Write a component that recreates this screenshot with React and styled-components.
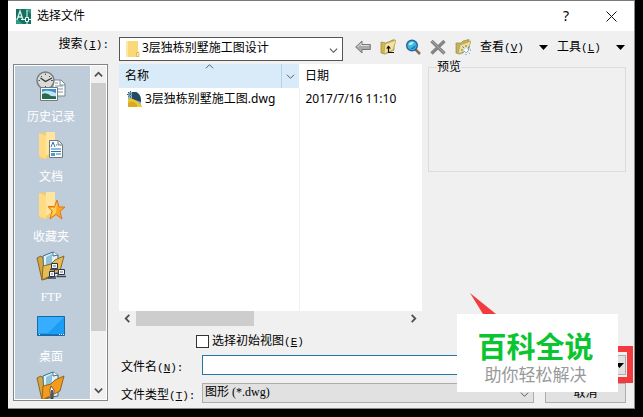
import React from "react";
import styled, { createGlobalStyle } from "styled-components";

const GlobalStyle = createGlobalStyle`
  * {
    box-sizing: border-box;
  }
  body {
    margin: 0;
    background: #000;
    color: #000;
    font-family: "Noto Sans", "Noto Sans CJK SC", sans-serif;
    font-size: 12px;
    line-height: 16px;
  }
  button, input, select {
    font: inherit;
    color: inherit;
    margin: 0;
    padding: 0;
    border-radius: 0;
  }
  svg {
    display: block;
    flex: none;
  }
`;

const Page = styled.div`
  padding: 0 8px;
`;

const Dialog = styled.main`
  position: relative;
  background: #f0f0f0;
  border-top: 1px solid #7b7b74;
  border-right: 1px solid #8a8a8a;
  border-bottom: 1px solid #8a8a8a;
`;

const TitleBar = styled.header`
  display: flex;
  align-items: center;
  height: 30px;
  padding: 0 8px;
  background: #fff;
`;

const Title = styled.h1`
  flex: 1;
  margin: 0 0 0 6px;
  font-size: 12px;
  font-weight: 400;
`;

const PlainButton = styled.button`
  display: flex;
  align-items: center;
  justify-content: center;
  border: 0;
  background: none;
`;

const CaptionButton = styled(PlainButton)`
  width: 30px;
  height: 30px;
  margin-left: 15px;
  font-size: 14px;
`;

const SearchRow = styled.div`
  display: flex;
  align-items: flex-start;
  height: 30px;
  padding: 6px 8px 0 5px;
`;

const SearchLabel = styled.label`
  width: 106px;
  padding-right: 10px;
  text-align: right;
  line-height: 14px;
`;

const KeyText = styled.span`
  font-family: "Liberation Mono", monospace;
  font-size: 11px;
  line-height: 0;
`;

const SelectBox = styled.div`
  position: relative;
  flex: 1;
  display: flex;
  align-items: center;
  min-width: 0;
  height: ${(p) => (p.$folder ? 24 : 20)}px;
  padding-left: ${(p) => (p.$folder ? 6 : 0)}px;
  border: 1px solid ${(p) => (p.$folder ? "#555" : "#adadad")};
  background: ${(p) => (p.$folder ? "#fff" : "#e1e1e1")};

  select {
    flex: 1;
    min-width: 0;
    height: 100%;
    padding: 0 20px 3px 2px;
    border: 0;
    appearance: none;
    background: none;
    font-family: ${(p) => (p.$folder ? "inherit" : '"Liberation Serif", "Noto Sans CJK SC", serif')};
  }
  > svg:last-child {
    position: absolute;
    right: 4px;
    bottom: ${(p) => (p.$folder ? 5 : 3)}px;
    pointer-events: none;
  }
`;

const Toolbar = styled.div`
  display: flex;
  align-items: center;
  gap: 9px;
  height: 20px;
  margin-left: 12px;
  padding-right: 1px;
`;

const MenuButton = styled(PlainButton)`
  justify-content: space-between;
  width: 68px;
`;

const Body = styled.div`
  display: flex;
  align-items: flex-start;
  gap: 11px;
  padding: 0 8px 5px 5px;
`;

const Places = styled.nav`
  display: flex;
  width: 95px;
  height: 337px;
  margin-top: 3px;
  border: 1px solid #82858a;
  background: #fff;
  padding: 1px;
`;

const PlaceList = styled.div`
  flex: 1;
  margin-right: 1px;
  padding-top: 2px;
  overflow: hidden;
  background: #bfcddb;
`;

const Place = styled(PlainButton)`
  flex-direction: column;
  gap: 7px;
  width: 100%;
  height: 60px;
  padding-right: 3px;
  color: #fff;
  line-height: 18px;
  font-family: "Liberation Serif", "Noto Sans CJK SC", serif;
`;

const PlaceName = styled.span`
  height: 18px;
`;

const ScrollBar = styled.div`
  display: flex;
  flex-direction: ${(p) => (p.$vertical ? "column" : "row")};
  ${(p) => (p.$vertical ? "width: 15px" : "height: 16px")};
  background: #f0f0f0;

  button {
    flex: none;
    width: ${(p) => (p.$vertical ? 15 : 17)}px;
    height: ${(p) => (p.$vertical ? 17 : 15)}px;
  }
`;

const Track = styled.div`
  flex: 1;
`;

const Thumb = styled.div`
  background: #cdcdcd;
  width: ${(p) => (p.$vertical ? "100%" : "44%")};
  height: ${(p) => (p.$vertical ? "83%" : "15px")};
`;

const Content = styled.div`
  flex: 1;
  min-width: 0;
`;

const Panels = styled.div`
  display: flex;
  align-items: flex-start;
  gap: 6px;
`;

const FilePanel = styled.section`
  flex: 1;
  min-width: 0;
  padding-top: 3px;
`;

const FileTable = styled.table`
  width: 100%;
  height: 247px;
  table-layout: fixed;
  border-collapse: collapse;
  background: #fff;

  th {
    height: 24px;
    padding: 0;
    font-weight: 400;
    text-align: left;
  }
  th:first-child {
    width: 180px;
    background: #d9ebf9;
  }
  td {
    height: 22px;
    padding: 0 0 0 6px;
    white-space: nowrap;
  }
  td:first-child {
    border-right: 1px solid #f0f0f0;
    padding-left: 8px;
  }
  tr:last-child td {
    height: auto;
  }
`;

const HeadCell = styled.div`
  position: relative;
  display: flex;
  align-items: center;
  height: 24px;
  padding-left: 6px;

  > button:first-child {
    flex: 1;
    justify-content: flex-start;
  }
  > svg {
    position: absolute;
    left: 48%;
    top: -2px;
  }
`;

const HeadArrow = styled(PlainButton)`
  width: 18px;
  height: 24px;
  border-left: 1px solid #b5d3ea;
`;

const FileName = styled.div`
  display: flex;
  align-items: center;
  gap: 2px;
`;

const Preview = styled.fieldset`
  width: 198px;
  height: 111px;
  min-width: 0;
  margin: 0;
  padding: 0;
  border: 1px solid #dcdcdc;

  legend {
    margin-left: 8px;
    padding: 0;
    line-height: 12px;
  }
`;

const ViewOption = styled.label`
  display: flex;
  align-items: center;
  gap: 3px;
  padding: 6px 0 4px 77px;

  input {
    appearance: none;
    width: 13px;
    height: 13px;
    border: 1px solid #333;
    background: #fff;
  }
`;

const Fields = styled.div`
  display: grid;
  grid-template-columns: 81px minmax(0, 1fr) 81px;
  gap: 8px 0;
  padding: 2px 0 0 2px;

  > label {
    height: 20px;
    padding-top: 4px;
  }
`;

const NameInput = styled.input`
  width: 100%;
  height: 20px;
  padding: 0 4px;
  border: 1px solid #2476a8;
  background: #fff;
  outline: 0;
`;

const FieldSlot = styled.div`
  display: flex;
  padding-right: 11px;
`;

const PushButton = styled(PlainButton)`
  width: 100%;
  height: 20px;
  border: 1px solid #adadad;
  background: #e1e1e1;
`;

const OpenSlot = styled.div`
  position: relative;

  ${PushButton} {
    justify-content: flex-end;
    padding-right: 1px;
  }
`;

const RedFrame = styled.div`
  position: absolute;
  inset: -9px -7px -8px;
  border: 6px solid #f23a3f;
  pointer-events: none;
`;

const Banner = styled.aside`
  position: absolute;
  right: 16px;
  bottom: 16px;
  width: 161px;
  padding: 12px 4px 8px 0;
  background: #fff;
  text-align: center;
  font-family: "Noto Sans CJK SC", sans-serif;

  strong {
    display: block;
    color: #0ac52f;
    font-size: 29px;
    font-weight: 700;
    line-height: 38px;
  }
  span {
    display: block;
    color: #999;
    font-size: 17px;
    line-height: 20px;
  }
  svg {
    position: absolute;
    left: 12px;
    bottom: 100%;
  }
`;

const Chevron = ({ turn = 0, size = 9, color = "#505050", weight = 2 }) => (
  <svg width={size} height={size} viewBox="0 0 10 10" fill="none">
    <path d="M1 3 5 7 9 3" stroke={color} strokeWidth={weight} transform={`rotate(${turn} 5 5)`} />
  </svg>
);

const Caret = () => (
  <svg width="9" height="5" viewBox="0 0 9 5">
    <path d="M0 0H9L4.500 5Z" fill="#000" />
  </svg>
);

const AppIcon = () => (
  <svg width="15" height="15" viewBox="0 0 15 15">
    <path d="M0 0H15V15H0Z" fill="#167062" />
    <path d="M0 9 7 15H0ZM9 0H15V5Z" fill="#2c9b84" />
    <path d="M1 11 4 2 7 11M2 8H6" stroke="#d8f1e9" fill="none" strokeWidth="1.300" />
    <path d="M11 1V15M5 10.500H15" stroke="#e8fff8" />
    <path d="M9.500 8.500H12.500V12.500H9.500Z" fill="#167062" stroke="#e8fff8" />
  </svg>
);

const SmallFolder = () => (
  <svg width="14" height="16" viewBox="0 0 14 16">
    <path d="M0 0H12V10L13 11V16H0Z" fill="#f8d877" />
    <path d="M0 0H2V16H0Z" fill="#ffe9a2" />
    <path d="M10.500 11.500H13V15.500H10.500Z" fill="#ffe9a2" stroke="#d7ae4a" strokeWidth=".7" />
  </svg>
);

const DwgIcon = () => (
  <svg width="16" height="16" viewBox="0 0 16 16">
    <path d="M1 1H9C12 2 14 5 14 10V15H1Z" fill="#8fb4c6" />
    <path d="M5 1H9C13 3 14 6 14 11L5 8Z" fill="#234963" />
    <path d="M1 8C5 6 9 9 15 15V16H1Z" fill="#f1c62d" />
    <path d="M1 12Q6 8 10 14V16H1Z" fill="#dba91f" />
    <path d="M3.500 0V7M0 3.500H7M1 1 6 6M6 1 1 6" stroke="#315a72" strokeDasharray="1.500 1" />
  </svg>
);

const BackIcon = () => (
  <svg width="16" height="16" viewBox="0 0 16 16">
    <path d="M.7 8 7 2V5.500H15.300V10.500H7V14Z" fill="#aaa" stroke="#777" />
    <path d="M2.500 8 6 4.500V6.500H14" stroke="#ddd" fill="none" />
  </svg>
);

const UpIcon = () => (
  <svg width="16" height="16" viewBox="0 0 16 16">
    <path d="M1 3 6 4 14 .5V11L5 15 1 14Z" fill="#d2b64f" stroke="#9c8540" strokeWidth=".7" />
    <path d="M5 5 16 1 13 11 4 15Z" fill="#f2e4a0" stroke="#b99d48" strokeWidth=".7" />
    <path d="M8.500 7V13.500H14" stroke="#111" fill="none" strokeWidth="1.200" />
    <path d="M6 9.500 8.500 6.500 11 9.500Z" fill="#111" />
  </svg>
);

const SearchIcon = () => (
  <svg width="16" height="16" viewBox="0 0 16 16">
    <path d="M10 10 15 15" stroke="#8a6b4c" strokeWidth="2.500" />
    <circle cx="7" cy="6.500" r="5.300" fill="#45b9dc" stroke="#2668a6" strokeWidth="1.500" />
    <path d="M3.500 6Q5 2 9 3.500L6 6Z" fill="#c8f3fa" />
    <path d="M5 10Q10 11 11 6L8 8Z" fill="#1780ba" />
  </svg>
);

const DeleteIcon = () => (
  <svg width="16" height="16" viewBox="0 0 16 16">
    <path d="M1.500 2 14.500 14.500M14.500 2 1.500 14.500" stroke="#858585" strokeWidth="3.400" />
    <path d="M2 2 14 14" stroke="#a6a6a6" />
  </svg>
);

const NewFolderIcon = () => (
  <svg width="16" height="16" viewBox="0 0 16 16">
    <path d="M1 4 6 4 8 2 14 .5V10L5 15 1 14Z" fill="#c7b257" stroke="#968747" strokeWidth=".7" />
    <path d="M5 6 16 2 13 11 3 15Z" fill="#eddf9b" stroke="#b39e52" strokeWidth=".7" />
    <path d="M11 6V16M6 11H16M7.500 7.500 14.500 14.500M14.500 7.500 7.500 14.500" stroke="#3885bd" strokeDasharray="2 1" />
    <circle cx="11" cy="11" r="2" fill="#fff" />
  </svg>
);

const HistoryIcon = () => (
  <svg width="30" height="30" viewBox="0 0 30 30">
    <path d="M17 9H25L29 13V25H17Z" fill="#fff" stroke="#7b8588" />
    <path d="M24 9V14H29M19 12H22M19 15H27M19 18H27M19 21H27" stroke="#78939e" fill="none" />
    <circle cx="9.500" cy="9.500" r="8.500" fill="#dadbd6" stroke="#777e80" strokeWidth="1.500" />
    <path d="M9.500 2.500V4M9.500 15V17M2.500 9.500H4M15 9.500H17M5 5 6 6M14 5 13 6" stroke="#555" />
    <path d="M4.500 7 9.500 10.500 16 7" stroke="#333" fill="none" strokeWidth="1.300" />
    <path d="M4.500 16.500H21.500V29.500H4.500Z" fill="#fff" stroke="#747b7e" />
    <path d="M6 18H20V28H6Z" fill="#3b91cc" />
    <path d="M6 21Q11 18 20 22V25H6Z" fill="#c1e5f4" />
    <path d="M6 23Q11 21 15 25L20 26V28H6Z" fill="#266b4c" />
  </svg>
);

const FolderBase = () => (
  <>
    <path d="M3 2H19V26L5 28 3 26Z" fill="#f3ce69" />
    <path d="M10 1H19V19L10 25Z" fill="#ffe5a0" />
    <path d="M3 2 10 5V28L3 25Z" fill="#ffdc83" />
  </>
);

const DocumentsIcon = () => (
  <svg width="30" height="30" viewBox="0 0 30 30">
    <FolderBase />
    <path d="M13.500 9.500H22.500L26.500 13.500V26.500H13.500Z" fill="#fff" stroke="#6f7a80" />
    <path d="M22 10V14H26" fill="#dce5e8" stroke="#6f7a80" />
    <path d="M15 16 17 11 19 16M20 14H21M15 18H25M15 20.500H25M20 23H25" stroke="#2673a8" fill="none" />
    <path d="M15 22H19V25H15Z" fill="#4b9dc9" />
  </svg>
);

const FavoritesIcon = () => (
  <svg width="30" height="30" viewBox="0 0 30 30">
    <FolderBase />
    <path d="M21 9 23 16H29L24 20.500 26 28 20 23.500 14 28 16 20 12 15.500H18.500Z" fill="#ffa51f" stroke="#df781b" />
    <path d="M21 11 20 22 15 26 17 20 14 17H19Z" fill="#ffd25c" />
  </svg>
);

const OpenFolder = ({ front }) => (
  <>
    <path d="M1 7 5 5 7 7 15 4 17 26 6 29Z" fill="#d5a63f" stroke="#83672d" />
    <path d="M7 5 17 1 22 4V25L8 27Z" fill="#e3f2f7" stroke="#386b8d" />
    <path d="M10 6 16 3V19L10 23Z" fill="#8fc4df" />
    <path d="M17 1V5L22 4" fill="#fff" stroke="#386b8d" />
    <path d="M7 15 15 13 19 9 28 5 24 20 6 29Z" fill={front} stroke="#94651f" />
  </>
);

const FtpIcon = () => (
  <svg width="30" height="30" viewBox="0 0 30 30">
    <OpenFolder front="#e3bd55" />
    <path d="M18.500 18V26M18 22.500H24" stroke="#334" fill="none" />
    <path d="M15.500 12.500H21.500V17.500H15.500ZM22.500 18.500H28.500V23.500H22.500ZM13.500 20.500H18.500V25.500H13.500Z" fill="#eef7fc" stroke="#334" />
    <path d="M14 18.500H22M21 25.500H30M12 27H20" stroke="#445" strokeWidth="1.500" />
    <path d="M17 14H20V16H17ZM24 20H27V22H24ZM15 22H17V24H15Z" fill="#9dbbd0" />
  </svg>
);

const DesktopIcon = () => (
  <svg width="30" height="30" viewBox="0 0 30 30">
    <path d="M1.500 5.500H28.500V24.500H1.500Z" fill="#1b9df6" stroke="#1469a6" />
    <path d="M2 6H28L12 22H2Z" fill="#36adff" />
    <path d="M2 23.500H28" stroke="#1673b6" />
    <path d="M3 23.500H4M23 23.500H28" stroke="#e8f7ff" strokeDasharray="1 1" />
  </svg>
);

const BuzzsawIcon = () => (
  <svg width="30" height="30" viewBox="0 0 30 30">
    <OpenFolder front="#f49a1d" />
    <path d="M15 15 18 19 17 28H15L14 19Z" fill="#fff" stroke="#333" strokeWidth=".7" />
    <path d="M16 19V29" stroke="#222" strokeWidth="1.500" />
  </svg>
);

const places = [
  { name: "历史记录", icon: <HistoryIcon /> },
  { name: "文档", icon: <DocumentsIcon /> },
  { name: "收藏夹", icon: <FavoritesIcon /> },
  { name: "FTP", icon: <FtpIcon /> },
  { name: "桌面", icon: <DesktopIcon /> },
];

const tools = [
  { name: "返回", icon: <BackIcon /> },
  { name: "上一级", icon: <UpIcon /> },
  { name: "搜索 Web", icon: <SearchIcon /> },
  { name: "删除", icon: <DeleteIcon /> },
  { name: "创建新文件夹", icon: <NewFolderIcon /> },
];

const Mnemonic = ({ letter, colon }) => (
  <KeyText>
    (<u>{letter}</u>){colon && ":"}
  </KeyText>
);

const App = () => {
  const [fileName, setFileName] = React.useState("");
  const [initialView, setInitialView] = React.useState(false);

  return (
    <Page>
      <GlobalStyle />
      <Dialog>
        <TitleBar>
          <AppIcon />
          <Title>选择文件</Title>
          <CaptionButton aria-label="帮助">?</CaptionButton>
          <CaptionButton aria-label="关闭">
            <svg width="11" height="11" viewBox="0 0 11 11">
              <path d="M.5 .5 10.500 10.500M10.500 .5 .5 10.500" stroke="#111" />
            </svg>
          </CaptionButton>
        </TitleBar>

        <SearchRow>
          <SearchLabel htmlFor="look-in">
            搜索
            <Mnemonic letter="I" colon />
          </SearchLabel>
          <SelectBox $folder>
            <SmallFolder />
            <select id="look-in">
              <option>3层独栋别墅施工图设计</option>
            </select>
            <Chevron weight={1.2} />
          </SelectBox>
          <Toolbar>
            {tools.map((tool) => (
              <PlainButton key={tool.name} aria-label={tool.name}>
                {tool.icon}
              </PlainButton>
            ))}
            <MenuButton>
              <span>
                查看
                <Mnemonic letter="V" />
              </span>
              <Caret />
            </MenuButton>
            <MenuButton>
              <span>
                工具
                <Mnemonic letter="L" />
              </span>
              <Caret />
            </MenuButton>
          </Toolbar>
        </SearchRow>

        <Body>
          <Places>
            <PlaceList>
              {places.map((place) => (
                <Place key={place.name}>
                  {place.icon}
                  <PlaceName>{place.name}</PlaceName>
                </Place>
              ))}
              <Place aria-label="Buzzsaw">
                <BuzzsawIcon />
                <PlaceName />
              </Place>
            </PlaceList>
            <ScrollBar $vertical>
              <PlainButton aria-label="向上">
                <Chevron turn={180} />
              </PlainButton>
              <Track>
                <Thumb $vertical />
              </Track>
              <PlainButton aria-label="向下">
                <Chevron />
              </PlainButton>
            </ScrollBar>
          </Places>

          <Content>
            <Panels>
              <FilePanel>
                <FileTable>
                  <thead>
                    <tr>
                      <th>
                        <HeadCell>
                          <PlainButton>名称</PlainButton>
                          <Chevron turn={180} weight={1} />
                          <HeadArrow aria-label="筛选">
                            <Chevron weight={1} />
                          </HeadArrow>
                        </HeadCell>
                      </th>
                      <th>
                        <HeadCell>
                          <PlainButton>日期</PlainButton>
                        </HeadCell>
                      </th>
                    </tr>
                  </thead>
                  <tbody>
                    <tr>
                      <td>
                        <FileName>
                          <DwgIcon />
                          3层独栋别墅施工图.dwg
                        </FileName>
                      </td>
                      <td>2017/7/16 11:10</td>
                    </tr>
                    <tr>
                      <td />
                      <td />
                    </tr>
                  </tbody>
                </FileTable>
                <ScrollBar>
                  <PlainButton aria-label="向左">
                    <Chevron turn={90} />
                  </PlainButton>
                  <Track>
                    <Thumb />
                  </Track>
                  <PlainButton aria-label="向右">
                    <Chevron turn={-90} />
                  </PlainButton>
                </ScrollBar>
              </FilePanel>
              <Preview>
                <legend>预览</legend>
              </Preview>
            </Panels>

            <ViewOption>
              <input
                type="checkbox"
                checked={initialView}
                onChange={(e) => setInitialView(e.target.checked)}
              />
              <span>
                选择初始视图
                <Mnemonic letter="E" />
              </span>
            </ViewOption>

            <Fields>
              <label htmlFor="file-name">
                文件名
                <Mnemonic letter="N" colon />
              </label>
              <FieldSlot>
                <NameInput
                  id="file-name"
                  value={fileName}
                  onChange={(e) => setFileName(e.target.value)}
                />
              </FieldSlot>
              <OpenSlot>
                <PushButton aria-label="打开">
                  <Caret />
                </PushButton>
                <RedFrame />
              </OpenSlot>
              <label htmlFor="file-type">
                文件类型
                <Mnemonic letter="T" colon />
              </label>
              <FieldSlot>
                <SelectBox>
                  <select id="file-type">
                    <option>图形 (*.dwg)</option>
                  </select>
                  <Chevron weight={1} />
                </SelectBox>
              </FieldSlot>
              <PushButton>取消</PushButton>
            </Fields>
          </Content>
        </Body>

        <Banner>
          <svg width="28" height="22" viewBox="0 0 28 22">
            <path d="M1 1 27 22H14Z" fill="#f23a3f" />
          </svg>
          <strong>百科全说</strong>
          <span>助你轻松解决</span>
        </Banner>
      </Dialog>
    </Page>
  );
};

export default App;
